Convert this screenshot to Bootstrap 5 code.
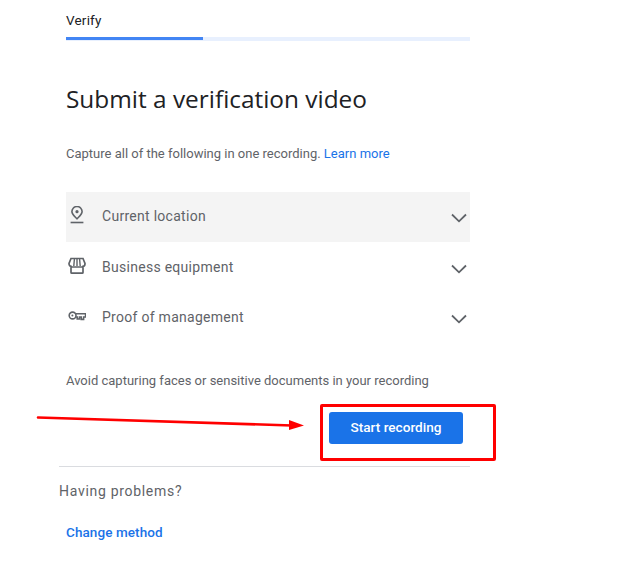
<!DOCTYPE html>
<html lang="en">
<head>
  <meta charset="UTF-8">
  <meta name="viewport" content="width=device-width, initial-scale=1.0">
  <title>Verify</title>
  <link rel="stylesheet" href="https://cdn.jsdelivr.net/npm/bootstrap@5.3.0/dist/css/bootstrap.min.css">
  <style>
    body { background: #fff; font-family: Roboto, sans-serif; color: #5f6368; position: relative; width: 623px; height: 571px; overflow: hidden; }
    .page-wrap { width: 404px; margin-left: 66px; }
    .step-name { font-size: 13.5px; line-height: 20px; color: #202124; padding-top: 10px; letter-spacing: .2px; }
    .step-bar { height: 4px; margin-top: 7px; background: #e8f0fe; }
    .step-fill { height: 3px; background: #4285f4; }
    .title-text { font-family: "Open Sans", sans-serif; font-size: 24.4px; line-height: 32px; font-weight: 400; color: #202124; margin: 42px 0 0; }
    .intro-text { font-size: 13px; line-height: 20px; margin: 29px 0 0; }
    .blue-link { color: #1a73e8; text-decoration: none; }
    .check-list { margin-top: 28px; }
    .check-row { height: 50px; padding: 0 2px 1px; font-size: 14px; letter-spacing: .28px; }
    .check-row + .check-row { padding-bottom: 0; }
    .check-row.active-row { background: #f4f4f4; }
    .check-icon { width: 18px; height: 18px; margin-right: 16px; margin-top: -3px; flex: none; }
    .check-chev { width: 16px; height: 10px; margin-right: 1px; margin-top: 3px; flex: none; }
    .warn-text { font-size: 13px; line-height: 20px; margin: 29px 0 0; }
    .start-btn { width: 134px; height: 32px; margin: 21px 0 0 263px; padding: 0 0 2px; display: block; background: #1a73e8; border: 0; border-radius: 3px; color: #fff; font-size: 13.6px; font-weight: 500; }
    .rule-line { width: 411px; margin: 22px 0 0 -7px; border-top: 1px solid #dadce0; opacity: 1; }
    .help-title { font-size: 14px; line-height: 20px; margin: 14px 0 0 -7px; font-weight: 400; color: #5f6368; letter-spacing: .7px; }
    .change-link { display: block; font-size: 13.5px; font-weight: 500; line-height: 20px; margin-top: 21px; letter-spacing: .08px; }
    .mark-box { position: absolute; left: 320px; top: 404px; width: 176px; height: 57px; border: 3px solid #f00; border-radius: 2px; }
    .mark-arrow { position: absolute; left: 30px; top: 410px; }
  </style>
</head>

<body>
  <div class="page-wrap">
    <div class="step-name">Verify</div>
    <div class="step-bar"><div class="step-fill" style="width: 34%"></div></div>

    <h1 class="title-text">Submit a verification video</h1>
    <p class="intro-text">Capture all of the following in one recording. <a href="#" class="blue-link">Learn more</a></p>

    <div class="check-list">
      <div class="check-row active-row d-flex align-items-center">
        <svg class="check-icon" viewBox="0 0 18 18" fill="none" stroke="#5f6368" stroke-width="1.6"><path d="M9 12.8C6.4 10.2 3.9 8.4 3.9 5.6A5.1 5.1 0 0 1 14.1 5.6C14.1 8.4 11.6 10.2 9 12.8Z"/><circle cx="9" cy="5.7" r="1.6" fill="#5f6368" stroke="none"/><path d="M2.6 16.5H15.4"/></svg>
        <span class="flex-grow-1">Current location</span>
        <svg class="check-chev" viewBox="0 0 16 10" fill="none" stroke="#5f6368" stroke-width="1.8"><path d="M1 1.5L8 8.3L15 1.5"/></svg>
      </div>
      <div class="check-row d-flex align-items-center">
        <svg class="check-icon" viewBox="0 0 18 18" fill="none" stroke="#5f6368" stroke-width="1.7"><path d="M3 1.5H15L17 6.5C17 8.4 15.8 9.4 15 9.4V15.5C15 16 14.6 16.2 14.2 16.2H3.8C3.4 16.2 3 16 3 15.5V9.4C2.2 9.4 1 8.4 1 6.5Z"/><path d="M3 10H15M6.4 2L5.8 9M9 2V9M11.6 2L12.2 9" stroke-width="1.4"/></svg>
        <span class="flex-grow-1">Business equipment</span>
        <svg class="check-chev" viewBox="0 0 16 10" fill="none" stroke="#5f6368" stroke-width="1.8"><path d="M1 1.5L8 8.3L15 1.5"/></svg>
      </div>
      <div class="check-row d-flex align-items-center">
        <svg class="check-icon" viewBox="0 0 18 18" fill="none" stroke="#5f6368" stroke-width="1.6"><circle cx="4.6" cy="8.5" r="3.4"/><circle cx="4.4" cy="8.5" r="1" fill="#5f6368" stroke="none"/><path d="M8 6.8H17.6V10H15.6V12.4H13.2V10H11.4V12H9.2V10H8"/></svg>
        <span class="flex-grow-1">Proof of management</span>
        <svg class="check-chev" viewBox="0 0 16 10" fill="none" stroke="#5f6368" stroke-width="1.8"><path d="M1 1.5L8 8.3L15 1.5"/></svg>
      </div>
    </div>

    <p class="warn-text">Avoid capturing faces or sensitive documents in your recording</p>
    <button type="button" class="btn start-btn">Start recording</button>
    <hr class="rule-line">
    <div class="help-title">Having problems?</div>
    <a href="#" class="blue-link change-link">Change method</a>
  </div>

  <!-- red annotations on top of the screenshot -->
  <div class="mark-box"></div>
  <svg class="mark-arrow" width="280" height="30" viewBox="0 0 280 30"><path d="M8 7.5L262 15.5" stroke="#f00" stroke-width="2.6" stroke-linecap="round"/><path d="M259 10L274 15.5L259 20Z" fill="#f00"/></svg>
  <script src="https://cdn.jsdelivr.net/npm/bootstrap@5.3.0/dist/js/bootstrap.bundle.min.js"></script>
</body>
</html>
